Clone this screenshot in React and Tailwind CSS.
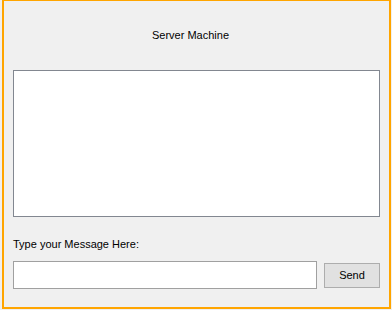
export default function App() {
  return (
    <div className="h-[310px] w-[392px] bg-[#f0f0f0] pl-[2px] font-['Liberation_Sans',Arial,sans-serif] text-[11px] text-black">
      <div className="flex h-[309px] w-[389px] flex-col border-x-2 border-b-2 border-t border-[#ffa500] px-[9px]">
        <div className="flex h-[69px] items-center justify-center pr-[12px]">
          <span>Server Machine</span>
        </div>
        <textarea
          aria-label="Messages"
          className="h-[147px] w-[367px] resize-none border border-[#828790] bg-white outline-none"
        />
        <div className="mt-[20px] h-[14px] leading-[14px]">Type your Message Here:</div>
        <div className="mt-[10px] flex items-center">
          <input
            aria-label="Message"
            className="h-[28px] w-[304px] border border-[#a0a0a0] bg-white outline-none"
          />
          <button
            type="button"
            className="ml-[7px] h-[25px] w-[56px] border border-[#adadad] bg-[#e1e1e1] text-[11px] leading-none"
          >
            Send
          </button>
        </div>
      </div>
    </div>
  );
}
